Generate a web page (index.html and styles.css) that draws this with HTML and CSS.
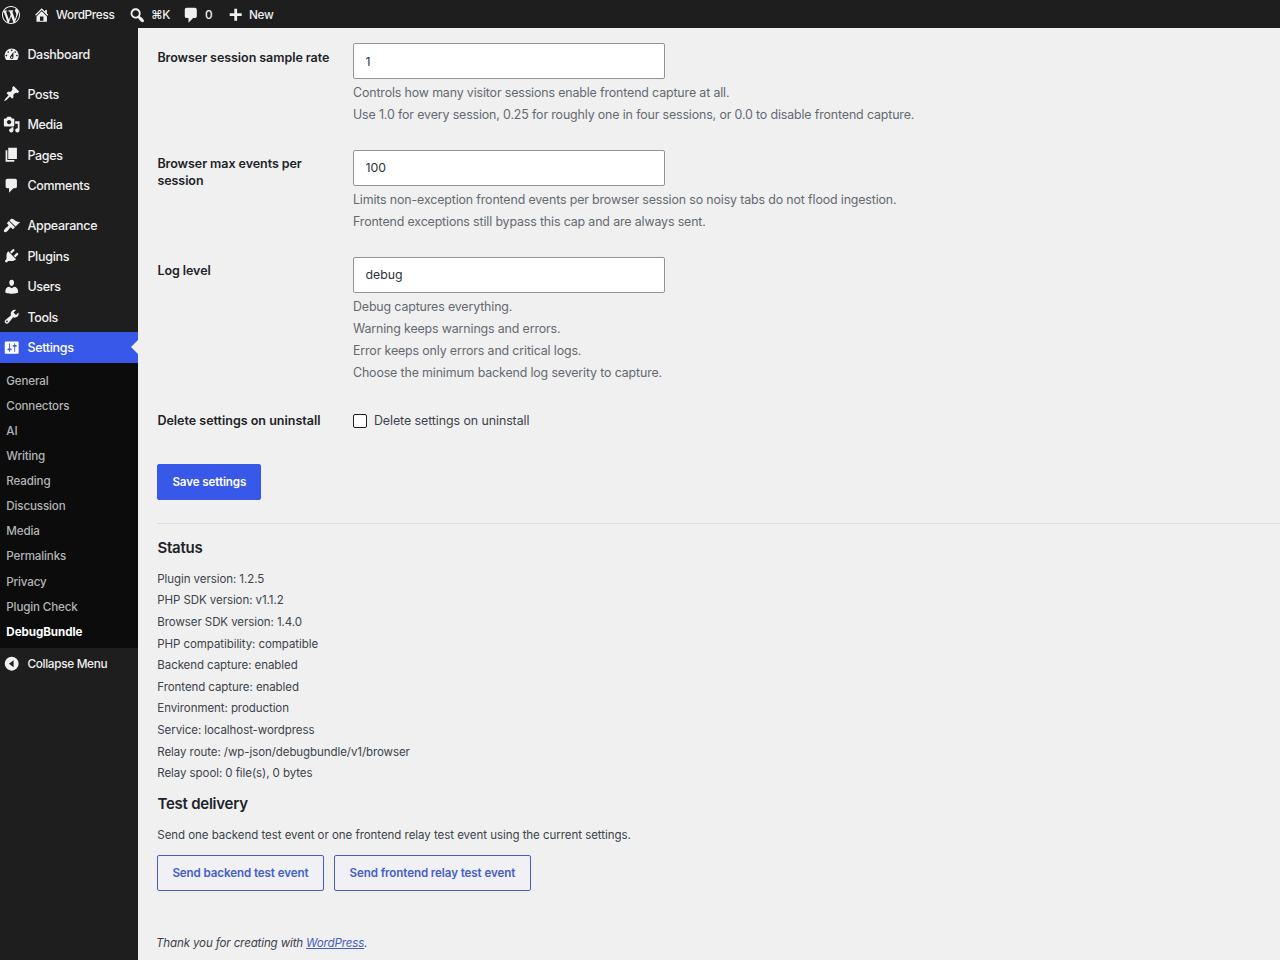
FILE: index.html
```html
<!DOCTYPE html>
<html lang="en">
<head>
<meta charset="utf-8">
<title>DebugBundle Settings</title>
<link rel="stylesheet" href="styles.css">
</head>
<body>
<header class="adminbar">
  <a class="bar-item logo"><svg viewBox="0 0 20 20"><path d="M20 10c0-5.51-4.49-10-10-10C4.48 0 0 4.49 0 10c0 5.52 4.48 10 10 10 5.51 0 10-4.48 10-10zM7.78 15.37L4.37 6.22c.55-.02 1.17-.08 1.17-.08.5-.06.44-1.13-.06-1.11 0 0-1.45.11-2.37.11-.18 0-.37 0-.58-.01C4.12 2.69 6.87 1.11 10 1.11c2.33 0 4.45.87 6.05 2.34-.68-.11-1.65.39-1.65 1.58 0 .74.45 1.36.9 2.1.35.61.55 1.36.55 2.46 0 1.49-1.4 5-1.4 5l-3.03-8.37c.54-.02.82-.17.82-.17.5-.05.44-1.25-.06-1.22 0 0-1.44.12-2.38.12-.87 0-2.33-.12-2.33-.12-.5-.03-.56 1.2-.06 1.22l.92.08 1.26 3.41zM17.41 10c.24-.64.74-1.87.43-4.25.7 1.29 1.05 2.71 1.05 4.25 0 3.29-1.73 6.24-4.4 7.78.97-2.59 1.94-5.2 2.92-7.78zM6.1 18.09C3.12 16.65 1.11 13.53 1.11 10c0-1.3.23-2.48.72-3.59C3.25 10.3 4.67 14.2 6.1 18.09zm4.03-6.63l2.58 6.98c-.86.29-1.76.45-2.71.45-.79 0-1.57-.11-2.29-.33.81-2.38 1.62-4.74 2.42-7.1z"/></svg></a>
  <a class="bar-item site"><svg viewBox="0 0 20 20"><path d="M16 8.5l1.53 1.53-1.06 1.06L10 4.6l-6.47 6.49-1.06-1.06L10 2.5l4 4v-2h2v4zm-6-2.46l6 5.99V18H4v-5.97zM12 17v-5H8v5h4z"/></svg><span>WordPress</span></a>
  <a class="bar-item search"><svg viewBox="0 0 20 20"><path d="M12.14 4.18c1.87 1.87 2.11 4.75.72 6.89.12.1.22.21.36.31.2.16.47.36.81.59.34.24.56.39.66.47.42.31.73.57.94.78.32.32.6.65.84 1 .25.35.44.69.59 1.04.14.35.21.68.18 1-.02.32-.14.59-.36.81s-.49.34-.81.36c-.31.02-.65-.04-.99-.19-.35-.14-.7-.34-1.04-.59-.35-.24-.68-.52-1-.84-.21-.21-.47-.52-.77-.93-.1-.13-.25-.35-.47-.66-.22-.32-.4-.57-.56-.78-.16-.2-.29-.35-.44-.5-2.07 1.09-4.69.76-6.44-.98-2.14-2.15-2.14-5.64 0-7.78 2.15-2.15 5.63-2.15 7.78 0zm-1.41 6.36c1.36-1.37 1.36-3.58 0-4.95-1.37-1.37-3.59-1.37-4.95 0-1.37 1.37-1.37 3.58 0 4.95 1.36 1.37 3.58 1.37 4.95 0z"/></svg><span>⌘K</span></a>
  <a class="bar-item comments"><svg viewBox="0 0 20 20"><path d="M5 2h9c1.1 0 2 .9 2 2v7c0 1.1-.9 2-2 2h-2l-5 5v-5H5c-1.1 0-2-.9-2-2V4c0-1.1.9-2 2-2z"/></svg><span>0</span></a>
  <a class="bar-item new"><svg viewBox="0 0 20 20"><path d="M17 9v3h-5v5H9v-5H4V9h5V4h3v5h5z"/></svg><span>New</span></a>
</header>
<div class="layout">
  <nav class="sidebar">
    <ul class="menu">
      <li class="item"><svg viewBox="0 0 20 20"><path d="M3.76 16h12.48c1.1-1.37 1.76-3.11 1.76-5 0-4.42-3.58-8-8-8s-8 3.58-8 8c0 1.89.66 3.63 1.76 5zM10 4c.55 0 1 .45 1 1s-.45 1-1 1-1-.45-1-1 .45-1 1-1zM6 6c.55 0 1 .45 1 1s-.45 1-1 1-1-.45-1-1 .45-1 1-1zm8 0c.55 0 1 .45 1 1s-.45 1-1 1-1-.45-1-1 .45-1 1-1zm-5.37 5.55L12 7v6c0 1.1-.9 2-2 2s-2-.9-2-2c0-.57.24-1.08.63-1.45zM4 10c.55 0 1 .45 1 1s-.45 1-1 1-1-.45-1-1 .45-1 1-1zm12 0c.55 0 1 .45 1 1s-.45 1-1 1-1-.45-1-1 .45-1 1-1zm-5 3c0-.55-.45-1-1-1s-1 .45-1 1 .45 1 1 1 1-.45 1-1z"/></svg>Dashboard</li>
      <li class="item gap"><svg viewBox="0 0 20 20"><path d="M10.44 3.02l1.82-1.82 6.36 6.35-1.83 1.82c-1.05-.68-2.48-.57-3.41.36l-.75.75c-.92.93-1.04 2.35-.35 3.41l-1.83 1.82-2.41-2.41-2.8 2.79c-.42.42-3.38 2.71-3.8 2.29s1.86-3.39 2.28-3.81l2.79-2.79L4.1 9.36l1.83-1.82c1.05.69 2.48.57 3.4-.36l.75-.75c.93-.92 1.05-2.35.36-3.41z"/></svg>Posts</li>
      <li class="item"><svg viewBox="0 0 20 20"><path d="M13 11V4c0-.55-.45-1-1-1h-1.67L9 1H5L3.67 3H2c-.55 0-1 .45-1 1v7c0 .55.45 1 1 1h10c.55 0 1-.45 1-1zM7 4.5c1.38 0 2.5 1.12 2.5 2.5S8.38 9.5 7 9.5 4.5 8.38 4.5 7 5.62 4.5 7 4.5zM14 6h5v10.5c0 1.38-1.12 2.5-2.5 2.5S14 17.88 14 16.5s1.12-2.5 2.5-2.5c.17 0 .34.02.5.05V9h-3V6zm-4 8.05V13h2v3.5c0 1.38-1.12 2.5-2.5 2.5S7 17.88 7 16.5 8.12 14 9.5 14c.17 0 .34.02.5.05z"/></svg>Media</li>
      <li class="item"><svg viewBox="0 0 20 20"><path d="M6 15V2h10v13H6zm-1 1h8v2H3V5h2v11z"/></svg>Pages</li>
      <li class="item"><svg viewBox="0 0 20 20"><path d="M5 2h9c1.1 0 2 .9 2 2v7c0 1.1-.9 2-2 2h-2l-5 5v-5H5c-1.1 0-2-.9-2-2V4c0-1.1.9-2 2-2z"/></svg>Comments</li>
      <li class="item gap"><svg viewBox="0 0 20 20"><path d="M14.48 11.06L7.41 3.99l1.5-1.5c.5-.56 2.3-.47 3.51.32 1.21.8 1.43 1.28 2.91 2.1 1.18.64 2.45 1.26 4.45.85zm-.71.71L6.7 4.7 4.93 6.47c-.39.39-.39 1.02 0 1.41l1.06 1.06c.39.39.39 1.03 0 1.42-.6.6-1.43 1.11-2.21 1.69-.35.26-.7.53-1.01.84C1.43 14.23.4 16.08 1.4 17.07c.99 1 2.84-.03 4.18-1.36.31-.31.58-.66.85-1.02.57-.78 1.08-1.61 1.69-2.21.39-.39 1.02-.39 1.41 0l1.06 1.06c.39.39 1.02.39 1.41 0z"/></svg>Appearance</li>
      <li class="item"><svg viewBox="0 0 20 20"><path d="M13.11 4.36L9.87 7.6 8 5.73l3.24-3.24c.35-.34 1.05-.2 1.56.32.52.51.66 1.21.31 1.55zm-8 1.77l.91-1.12 9.01 9.01-1.19.84c-.71.71-2.63 1.16-3.82 1.16H6.14L4.9 17.26c-.59.59-1.54.59-2.12 0-.59-.58-.59-1.53 0-2.12l1.24-1.24v-3.88c0-1.13.4-3.19 1.09-3.89zm7.26 3.97l3.24-3.24c.34-.35 1.04-.21 1.55.31.52.51.66 1.21.31 1.55l-3.24 3.25z"/></svg>Plugins</li>
      <li class="item"><svg viewBox="0 0 20 20"><path d="M10 9.25c-2.27 0-2.73-3.44-2.73-3.44C7 4.02 7.82 2 9.97 2c2.16 0 2.98 2.02 2.71 3.81 0 0-.41 3.44-2.68 3.44zm0 2.57L12.72 10c2.39 0 4.52 2.33 4.52 4.53v2.49s-3.65 1.13-7.24 1.13c-3.65 0-7.24-1.13-7.24-1.13v-2.49c0-2.25 1.94-4.48 4.47-4.48z"/></svg>Users</li>
      <li class="item"><svg viewBox="0 0 20 20"><path d="M16.68 9.77c-1.34 1.34-3.3 1.67-4.95.99l-5.41 6.52c-.99.99-2.59.99-3.58 0s-.99-2.59 0-3.57l6.52-5.42c-.68-1.65-.35-3.61.99-4.95 1.28-1.28 3.12-1.62 4.72-1.06l-2.89 2.89 2.82 2.82 2.86-2.87c.53 1.58.18 3.39-1.08 4.65zM3.81 16.21c.4.39 1.04.39 1.43 0 .4-.4.4-1.04 0-1.43-.39-.4-1.03-.4-1.43 0-.39.39-.39 1.03 0 1.43z"/></svg>Tools</li>
      <li class="item current"><svg viewBox="0 0 20 20"><path d="M18 16V4c0-.55-.45-1-1-1H3c-.55 0-1 .45-1 1v12c0 .55.45 1 1 1h14c.55 0 1-.45 1-1zM8 11h1c.55 0 1 .45 1 1s-.45 1-1 1H8v1.5c0 .28-.22.5-.5.5s-.5-.22-.5-.5V13H6c-.55 0-1-.45-1-1s.45-1 1-1h1V5.5c0-.28.22-.5.5-.5s.5.22.5.5V11zm5-2h-1c-.55 0-1-.45-1-1s.45-1 1-1h1V5.5c0-.28.22-.5.5-.5s.5.22.5.5V7h1c.55 0 1 .45 1 1s-.45 1-1 1h-1v5.5c0 .28-.22.5-.5.5s-.5-.22-.5-.5V9z"/></svg>Settings</li>
    </ul>
    <ul class="submenu">
      <li>General</li><li>Connectors</li><li>AI</li><li>Writing</li><li>Reading</li><li>Discussion</li><li>Media</li><li>Permalinks</li><li>Privacy</li><li>Plugin Check</li><li class="active">DebugBundle</li>
    </ul>
    <div class="item collapse"><svg viewBox="0 0 20 20"><path fill-rule="evenodd" d="M10 2a8 8 0 1 0 0 16 8 8 0 0 0 0-16zM12.2 6v8L6.8 10z"/></svg>Collapse Menu</div>
  </nav>
  <main class="content">
    <form class="settings">
      <div class="row">
        <label class="name">Browser session sample rate</label>
        <div class="field"><input class="box" type="text" value="1"><p>Controls how many visitor sessions enable frontend capture at all.</p><p>Use 1.0 for every session, 0.25 for roughly one in four sessions, or 0.0 to disable frontend capture.</p></div>
      </div>
      <div class="row">
        <label class="name">Browser max events per session</label>
        <div class="field"><input class="box" type="text" value="100"><p>Limits non-exception frontend events per browser session so noisy tabs do not flood ingestion.</p><p>Frontend exceptions still bypass this cap and are always sent.</p></div>
      </div>
      <div class="row">
        <label class="name">Log level</label>
        <div class="field"><input class="box" type="text" value="debug"><p>Debug captures everything.</p><p>Warning keeps warnings and errors.</p><p>Error keeps only errors and critical logs.</p><p>Choose the minimum backend log severity to capture.</p></div>
      </div>
      <div class="row check-row">
        <label class="name">Delete settings on uninstall</label>
        <label class="check"><input type="checkbox"><span>Delete settings on uninstall</span></label>
      </div>
      <button class="button primary" type="button">Save settings</button>
    </form>
    <section class="status">
      <h2>Status</h2>
      <ul>
        <li>Plugin version: 1.2.5</li><li>PHP SDK version: v1.1.2</li><li>Browser SDK version: 1.4.0</li><li>PHP compatibility: compatible</li><li>Backend capture: enabled</li><li>Frontend capture: enabled</li><li>Environment: production</li><li>Service: localhost-wordpress</li><li>Relay route: /wp-json/debugbundle/v1/browser</li><li>Relay spool: 0 file(s), 0 bytes</li>
      </ul>
    </section>
    <section class="delivery">
      <h2>Test delivery</h2>
      <p>Send one backend test event or one frontend relay test event using the current settings.</p>
      <div class="actions"><button class="button" type="button">Send backend test event</button><button class="button" type="button">Send frontend relay test event</button></div>
    </section>
    <footer class="footer">Thank you for creating with <a>WordPress</a>.</footer>
  </main>
</div>
</body>
</html>
```
FILE: styles.css
```css
* { box-sizing: border-box; }
body { margin: 0; height: 960px; overflow: hidden; background: #f0f0f1; color: #3c434a; font-family: Inter, "Liberation Sans", sans-serif; font-size: 12px; }
ul, p, h2 { margin: 0; padding: 0; list-style: none; }
svg { fill: currentColor; flex: none; display: block; }
.adminbar { height: 28px; background: #1e1e1e; color: #f0f0f1; display: flex; align-items: center; padding-left: 2px; }
.bar-item { display: flex; align-items: center; height: 28px; padding-top: 1px; font-size: 11.8px; font-weight: 500; letter-spacing: -0.34px; }
.bar-item svg { width: 17.4px; height: 17.4px; }
.logo { width: 31px; }
.logo svg { width: 18px; height: 18px; }
.site { width: 94.5px; gap: 5.6px; }
.search { width: 54px; gap: 5px; }
.search svg { width: 18.5px; height: 18.5px; margin-top: 1px; }
.comments { width: 44px; gap: 5px; }
.comments svg { width: 18.5px; height: 18.5px; margin-top: 1px; }
.new { gap: 5px; }
.new svg { width: 18.5px; height: 18.5px; }
.layout { display: grid; grid-template-columns: 138px 1fr; height: 932px; }
.sidebar { background: #1e1e1e; color: #f0f0f1; padding-top: 11px; }
.item { display: flex; align-items: center; gap: 7px; height: 30.5px; padding-left: 3px; font-size: 12.5px; font-weight: 500; letter-spacing: -0.3px; }
.item svg { width: 17.4px; height: 17.4px; }
.gap { margin-top: 9.4px; }
.current { background: #3858e9; color: #fff; position: relative; }
.current::after { content: ""; position: absolute; right: 0; top: 8px; border: 7px solid transparent; border-left: 0; border-right-color: #f0f0f1; }
.collapse { font-size: 11.8px; letter-spacing: -0.32px; }
.submenu { background: #0c0c0c; color: #b4b4b6; padding: 6px 0 3.6px 6.3px; font-size: 11.6px; letter-spacing: -0.14px; }
.submenu li { height: 25.1px; line-height: 25px; font-weight: 500; }
.submenu .active { color: #fff; font-weight: 700; letter-spacing: -0.04px; }
.content { padding: 15px 0 0 19px; min-width: 0; }
.row { display: grid; grid-template-columns: 196px 1fr; height: 106.8px; }
.row:nth-child(3) { height: 149.5px; }
.name { font-size: 12.5px; font-weight: 600; line-height: 17px; letter-spacing: -0.06px; color: #1d2327; padding: 5.5px 14px 0 0.4px; }
.field p { font-size: 12.4px; line-height: 22.2px; letter-spacing: -0.137px; color: #646970; white-space: nowrap; }
.box { display: block; width: 312px; height: 36px; margin-bottom: 3px; padding: 0 11.5px; border: 1px solid #949494; border-radius: 2px; background: #fff; color: #2c3338; font: 12.3px Inter, sans-serif; }
.check-row { height: 57.5px; }
.check-row .name { padding-top: 6px; letter-spacing: 0; }
.check { display: flex; gap: 7px; height: 29px; align-items: center; font-size: 12.4px; letter-spacing: -0.07px; }
.check input { appearance: none; width: 14px; height: 14px; margin: 0; border: 1px solid #1e1e1e; border-radius: 2px; background: #fff; }
.button { height: 36px; padding: 0 14.4px; border: 1px solid #465fc4; border-radius: 2px; background: #f0f0f5; color: #465fc4; font: 600 11.6px Inter, sans-serif; letter-spacing: -0.1px; white-space: nowrap; }
.primary { display: block; width: 104px; border-color: #3858e9; background: #3858e9; color: #fff; }
.status { margin-top: 23px; border-top: 1px solid #dcdcde; padding-top: 14px; }
h2 { font-size: 15px; line-height: 20px; font-weight: 600; letter-spacing: -0.23px; color: #1d2327; padding-left: 0.4px; }
.status ul { margin-top: 11.3px; font-size: 11.5px; letter-spacing: -0.07px; padding-left: 0.3px; }
.status li { height: 21.58px; line-height: 21.5px; }
.delivery { padding-top: 9.1px; }
.delivery p { margin-top: 11.4px; font-size: 11.5px; line-height: 20px; letter-spacing: -0.04px; padding-left: 0.3px; }
.actions { display: flex; gap: 10.3px; margin-top: 9.7px; }
.footer { margin: 43px 0 0 -1px; font-size: 11.6px; line-height: 18px; font-style: italic; letter-spacing: -0.16px; }
.footer a { color: #465fc4; text-decoration: underline; }
```
